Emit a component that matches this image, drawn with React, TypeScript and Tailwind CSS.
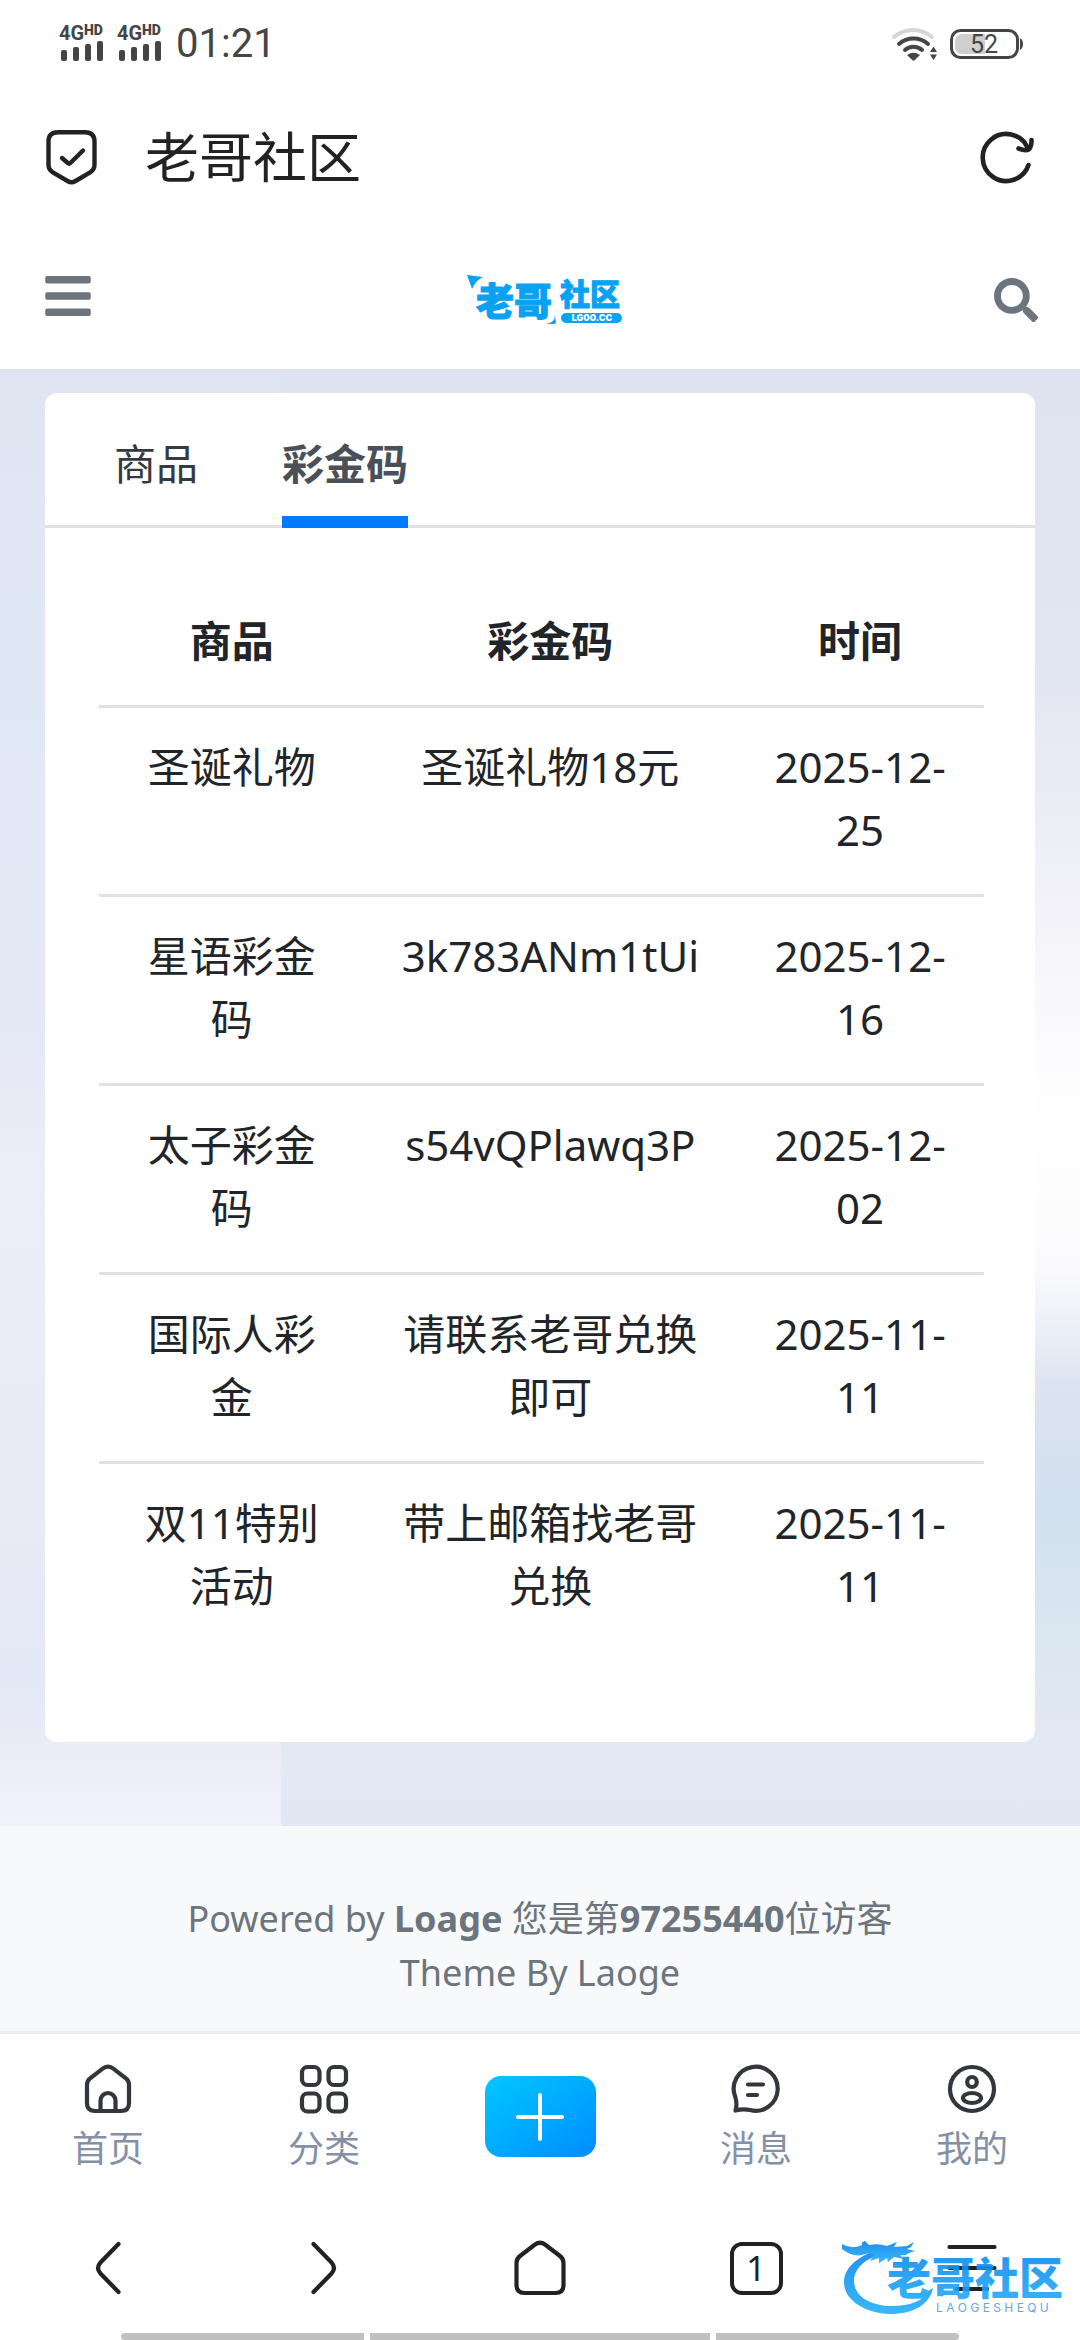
import { useState } from 'react'
import { FaBars, FaSearch } from 'react-icons/fa'

const TABS = ['商品', '彩金码']

const ROWS = [
  { item: '圣诞礼物', code: '圣诞礼物18元', date: ['2025-12-', '25'] },
  { item: '星语彩金码', code: '3k783ANm1tUi', date: ['2025-12-', '16'] },
  { item: '太子彩金码', code: 's54vQPlawq3P', date: ['2025-12-', '02'] },
  { item: '国际人彩金', code: '请联系老哥兑换即可', date: ['2025-11-', '11'] },
  { item: '双11特别活动', code: '带上邮箱找老哥兑换', date: ['2025-11-', '11'] },
]

function SignalIcon() {
  return (
    <svg className="overflow-visible" width="46" height="38" viewBox="0 0 46 38" fill="#454545">
      <text x="-1" y="15" fontSize="20" fontWeight="700" fontFamily="Roboto, sans-serif">4G</text>
      <text x="24" y="10" fontSize="14" fontWeight="900" fontFamily="Roboto, sans-serif">HD</text>
      <rect x="1" y="25" width="6" height="11" rx="2" />
      <rect x="13" y="22" width="6" height="14" rx="2" />
      <rect x="25" y="19" width="6" height="17" rx="2" />
      <rect x="37" y="16" width="6" height="20" rx="2" />
    </svg>
  )
}

function WifiIcon() {
  return (
    <svg width="48" height="36" viewBox="0 0 48 36" fill="none" strokeLinecap="round" strokeWidth="4">
      <path d="M4 11a29 29 0 0 1 38 0" stroke="#d6d6d6" />
      <path d="M9 18a22 22 0 0 1 29 0" stroke="#454545" />
      <path d="M15 24a13 13 0 0 1 17 0" stroke="#454545" />
      <path d="M17 29q6.500-4.500 13 0l-5.500 5.300q-1 .8-2 0z" fill="#454545" />
      <path d="M40 26l3.500-5.500L47 26zM40 28.500h7L43.500 34z" fill="#454545" />
    </svg>
  )
}

function BatteryIcon() {
  return (
    <svg className="overflow-visible" width="74" height="32" viewBox="0 0 74 32">
      <rect x="1.500" y="2.500" width="66" height="27" rx="9" fill="none" stroke="#454545" strokeWidth="3" />
      <path d="M12 6h23v20H12a7 7 0 0 1-7-7v-6a7 7 0 0 1 7-7z" fill="#cfcfcf" />
      <path d="M70 10q3 2 3 6t-3 6z" fill="#454545" />
      <text x="34" y="25" fontSize="25" textAnchor="middle" fill="#454545" fontFamily="Roboto, sans-serif">52</text>
    </svg>
  )
}

function ShieldIcon() {
  return (
    <svg width="51" height="56" viewBox="0 0 51 56" fill="none" stroke="#222" strokeWidth="4.400" strokeLinecap="round" strokeLinejoin="round">
      <path d="M12 3.200h27q9.500 0 9.500 9.500v23q0 5-4.300 7.600L29.500 52q-4 2.400-8 0L6.800 43.300q-4.300-2.600-4.300-7.600v-23q0-9.500 9.500-9.500z" />
      <path d="M16 29l5.800 5q1.300 1.200 2.600 0L37 21.500" />
    </svg>
  )
}

function ReloadIcon() {
  return (
    <svg width="54" height="54" viewBox="0 0 54 54" fill="none" stroke="#222" strokeWidth="4.600" strokeLinecap="round">
      <path d="M48.500 35A23.500 23.500 0 1 1 47.500 17.500" />
      <path d="M38.500 18.500q9 3.500 11.500-.5 1.800-3.600 1.500-8" />
    </svg>
  )
}

function SiteLogo() {
  return (
    <svg className="overflow-visible" width="160" height="52" viewBox="-3 0 160 52" fill="#08a2f2" fontFamily="'Noto Sans CJK SC', sans-serif" fontWeight="900">
      <path d="M0 1l16 2q-7 3-11 12z" />
      <path d="M88 41q0 8-9 9h8l2-1z" />
      <text x="9" y="41" fontSize="38" stroke="#08a2f2" strokeWidth="1">老哥</text>
      <text x="93" y="31" fontSize="30" stroke="#08a2f2" strokeWidth="1">社区</text>
      <rect x="94" y="39" width="61" height="10" rx="5" />
      <text x="125" y="47" fontSize="9" textAnchor="middle" fill="#fff" fontFamily="Inter, sans-serif">LG00.CC</text>
    </svg>
  )
}

function HomeIcon() {
  return (
    <svg width="48" height="50" viewBox="0 0 48 50" fill="none" stroke="#33373b" strokeWidth="4.200">
      <path d="M19.300 4.200q4.700-3.200 9.400 0l13.500 10.500q2.800 2.400 2.800 6V39q0 8-8 8H11q-8 0-8-8V20.700q0-3.600 2.800-6z" />
      <path d="M16.500 47V36.500a7.500 7.500 0 0 1 15 0V47" />
    </svg>
  )
}

function GridIcon() {
  return (
    <svg width="50" height="50" viewBox="0 0 50 50" fill="none" stroke="#33373b" strokeWidth="4.200">
      <rect x="3" y="3" width="17.500" height="18" rx="5.500" />
      <rect x="29.500" y="3" width="17.500" height="18" rx="5.500" />
      <rect x="3" y="29.500" width="17.500" height="18" rx="5.500" />
      <rect x="29.500" y="29.500" width="17.500" height="18" rx="5.500" />
    </svg>
  )
}

function MessageIcon() {
  return (
    <svg width="50" height="50" viewBox="0 0 50 50" fill="none" stroke="#33373b" strokeWidth="4.200" strokeLinecap="round" strokeLinejoin="round">
      <path d="M4.500 46.500q2-6-.2-13.500A22 22 0 1 1 19 46q-7-1.500-14.500.5z" />
      <path d="M17 20.500h15M17 31h9" />
    </svg>
  )
}

function UserIcon() {
  return (
    <svg width="50" height="50" viewBox="0 0 50 50" fill="none" stroke="#33373b" strokeWidth="4.200">
      <circle cx="25" cy="25" r="22" />
      <ellipse cx="25" cy="18" rx="4.800" ry="5" />
      <ellipse cx="25" cy="34" rx="9" ry="5" />
    </svg>
  )
}

// Dragon ring with the community name, floats over the browser bar
function Watermark() {
  return (
    <svg className="pointer-events-none absolute right-3 bottom-2 overflow-visible opacity-90" width="226" height="84" viewBox="0 0 226 84">
      <defs>
        <linearGradient id="wm" x1="0" y1="0" x2="0" y2="1">
          <stop offset="0" stopColor="#0a84e8" />
          <stop offset="1" stopColor="#22b0fb" />
        </linearGradient>
      </defs>
      <g fill="url(#wm)">
        <path d="M48 11C20 16 2 30 2 46c0 18 20 31 46 32 24 0 40-10 43-26l-5 3c-5 10-18 15-36 15-22 0-38-10-38-25 0-12 10-22 28-27z" />
        <path d="M0 8q10 6 20 1-1-3 3-4l4 4q10-2 18 1l10-4-3 5 13-1 7-4-3 5-4 2 8 2-6 2q-3 3-9 2l4 4-10-2-6 5-1-4-8 5v-5l-9 3 4-6q-6-3-12 0-10 2-20-6z" />
        <text x="45" y="59" fontSize="44" fontWeight="900" fontFamily="'Noto Sans CJK SC', sans-serif">老哥社区</text>
        <text x="94" y="76" fontSize="12" fontFamily="Inter, sans-serif" fill="#4aa3ee">L A O G E S H E Q U</text>
      </g>
    </svg>
  )
}

const NAV_LEFT = [
  { label: '首页', Icon: HomeIcon },
  { label: '分类', Icon: GridIcon },
]
const NAV_RIGHT = [
  { label: '消息', Icon: MessageIcon },
  { label: '我的', Icon: UserIcon },
]

function NavItem({ label, Icon }: { label: string; Icon: () => React.ReactElement }) {
  return (
    <a href="#" className="flex flex-1 flex-col items-center gap-2 text-4xl/[54px] text-[#8490a6]">
      <Icon />
      {label}
    </a>
  )
}

export default function App() {
  const [active, setActive] = useState(1)

  return (
    <div className="flex min-h-screen flex-col bg-white font-['Noto_Sans','Noto_Sans_CJK_SC',sans-serif] text-[#212529]">
      {/* Status bar */}
      <div className="flex h-[84px] items-center justify-between pt-1 pr-14 pl-[60px]">
        <div className="flex items-center gap-3 text-[#454545]">
          <SignalIcon />
          <SignalIcon />
          <span className="font-[Roboto,sans-serif] text-[40px]/[54px]">01:21</span>
        </div>
        <div className="flex items-center gap-3">
          <WifiIcon />
          <BatteryIcon />
        </div>
      </div>

      {/* Browser address bar */}
      <div className="flex h-[146px] items-center justify-between pr-[46px] pl-[46px]">
        <div className="flex items-center gap-12">
          <ShieldIcon />
          <h1 className="text-[54px]/[72px] text-[#222]">老哥社区</h1>
        </div>
        <button type="button" aria-label="刷新"><ReloadIcon /></button>
      </div>

      {/* Site header */}
      <header className="flex h-[139px] items-center justify-between px-[42px] text-[#6c757d]">
        <button type="button" aria-label="菜单" className="pb-2"><FaBars size={52} /></button>
        <a href="#" aria-label="老哥社区"><SiteLogo /></a>
        <button type="button" aria-label="搜索"><FaSearch size={44} /></button>
      </header>

      <main className="bg-[linear-gradient(#dfe4f1,#e1e8f5_20%,#e4e8f5_45%,#ecedf7_55%,#ebebf5_75%,#e2e8f5_90%,#ebecf7_95%,#f2f2fc),linear-gradient(#dfe3f0,#e2e6f3_20%,#ececf5_30%,#f8f7fb_42%,#ffffff_52%,#fafafc_62%,#dce3f1_70%,#d2e0ef_78%,#dae6f0_87%,#e3e9f4_94%,#e3e7f3)] bg-[size:26%_100%,100%_100%] bg-no-repeat px-[45px] pt-6 pb-[84px]">
        <section className="rounded-xl bg-white">
          <div role="tablist" className="flex gap-[84px] border-b-[3px] border-[#dee2e6] pl-[69px]">
            {TABS.map((tab, i) => (
              <button
                key={tab}
                type="button"
                role="tab"
                aria-selected={active === i}
                onClick={() => setActive(i)}
                className={`-mb-[3px] border-b-[12px] pt-[39px] pb-[21px] text-[42px]/[63px] ${
                  active === i ? 'border-[#007bff] font-bold text-[#495057]' : 'border-transparent text-[#343a40]'
                }`}
              >
                {tab}
              </button>
            ))}
          </div>

          <div className="pt-[50px] pr-[51px] pb-[92px] pl-[54px]">
            <table className="w-full table-fixed text-center text-[42px]/[63px]">
              <thead>
                <tr>
                  <th className="w-[30%] px-7 pt-[31px] pb-[33px]">商品</th>
                  <th className="w-[42%] px-7 pt-[31px] pb-[33px]">彩金码</th>
                  <th className="w-[28%] px-7 pt-[31px] pb-[33px]">时间</th>
                </tr>
              </thead>
              <tbody>
                {ROWS.map((row) => (
                  <tr key={row.item} className="align-top">
                    <td className="border-t-[3px] border-[#dee2e6] px-7 pt-[27px] pb-[33px]">{row.item}</td>
                    <td className="border-t-[3px] border-[#dee2e6] px-7 pt-[27px] pb-[33px]">{row.code}</td>
                    <td className="border-t-[3px] border-[#dee2e6] px-7 pt-[27px] pb-[33px]">
                      {row.date[0]}<wbr />{row.date[1]}
                    </td>
                  </tr>
                ))}
              </tbody>
            </table>
          </div>
        </section>
      </main>

      <footer className="bg-[#f8f9fa] pt-[66px] pb-[31px] text-center text-4xl/[54px] text-[#6c757d]">
        <p>Powered by <b>Loage</b> 您是第<b>97255440</b>位访客</p>
        <p>Theme By Laoge</p>
      </footer>

      {/* Site bottom navigation */}
      <nav className="flex items-start border-t-[3px] border-[#ececec] pt-[30px] pb-8">
        {NAV_LEFT.map((n) => <NavItem key={n.label} {...n} />)}
        <div className="flex flex-1 justify-center pt-3">
          <button type="button" aria-label="发布" className="flex h-[81px] w-[111px] items-center justify-center rounded-2xl bg-linear-to-br from-[#00c8ff] to-[#008cff]">
            <svg width="50" height="50" viewBox="0 0 50 50" stroke="#fff" strokeWidth="4" strokeLinecap="round">
              <path d="M3 25h44M25 3v44" />
            </svg>
          </button>
        </div>
        {NAV_RIGHT.map((n) => <NavItem key={n.label} {...n} />)}
      </nav>

      {/* Browser toolbar */}
      <div className="relative flex h-[120px] items-center">
        <button type="button" aria-label="后退" className="flex flex-1 justify-center">
          <svg width="28" height="56" viewBox="0 0 28 56" fill="none" stroke="#222" strokeWidth="4.200" strokeLinecap="round">
            <path d="M24.500 4L6.500 22.500q-5 5.500 0 11L24.500 52" />
          </svg>
        </button>
        <button type="button" aria-label="前进" className="flex flex-1 justify-center">
          <svg width="28" height="56" viewBox="0 0 28 56" fill="none" stroke="#222" strokeWidth="4.200" strokeLinecap="round">
            <path d="M3.500 4l18 18.500q5 5.500 0 11L3.500 52" />
          </svg>
        </button>
        <button type="button" aria-label="主页" className="flex flex-1 justify-center">
          <svg width="54" height="56" viewBox="0 0 54 56" fill="none" stroke="#222" strokeWidth="4.200">
            <path d="M22 4.500q5-3.500 10 0l15 11.500q3.500 2.700 3.500 7V45q0 8-8 8h-31q-8 0-8-8V23q0-4.300 3.500-7z" />
          </svg>
        </button>
        <button type="button" aria-label="标签页" className="flex flex-1 justify-center">
          <span className="flex size-[53px] items-center justify-center rounded-xl border-4 border-[#222] text-[34px]/[44px] text-[#222]">1</span>
        </button>
        <button type="button" aria-label="更多" className="flex flex-1 justify-center">
          <svg width="50" height="50" viewBox="0 0 50 50" stroke="#222" strokeWidth="4.200" strokeLinecap="round">
            <path d="M2.500 4h45M2.500 25h45M10 46h30" />
          </svg>
        </button>
        <Watermark />
      </div>

      {/* Gesture handles */}
      <div className="flex h-3 gap-1.5 px-[121px] pt-[5px]">
        <span className="flex-5 rounded-l-full bg-[#c0c0c0]" />
        <span className="flex-7 bg-[#c0c0c0]" />
        <span className="flex-5 rounded-r-full bg-[#c0c0c0]" />
      </div>
    </div>
  )
}
